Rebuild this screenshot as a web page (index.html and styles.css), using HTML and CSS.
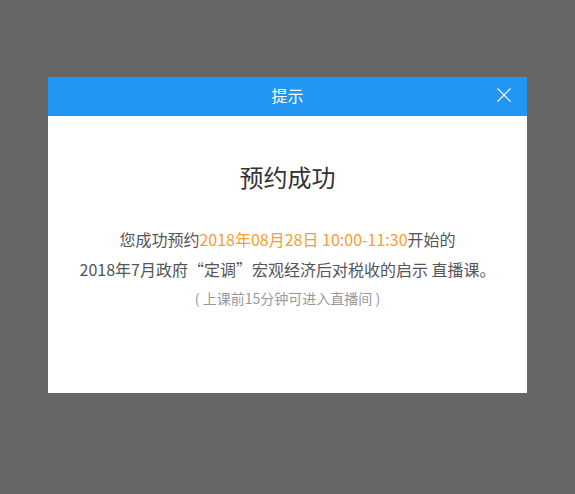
FILE: index.html
```html
<!DOCTYPE html>
<html lang="zh">
<head>
<meta charset="utf-8">
<link rel="stylesheet" href="styles.css">
</head>
<body>
<div class="overlay">
  <div class="dialog">
    <div class="dialog-header">
      <span class="dialog-title">提示</span>
      <span class="close">
        <svg width="14" height="14" viewBox="0 0 14 14"><path d="M0.5 0.5L13.5 13.5M13.5 0.5L0.5 13.5" stroke="#fff" stroke-width="1.2" fill="none"/></svg>
      </span>
    </div>
    <div class="dialog-body">
      <h2 class="success">预约成功</h2>
      <p class="line">您成功预约<span class="hl">2018年08月28日 10:00-11:30</span>开始的</p>
      <p class="line">2018年7月政府“定调”宏观经济后对税收的启示 直播课。</p>
      <p class="note">( 上课前15分钟可进入直播间 )</p>
    </div>
  </div>
</div>
</body>
</html>
```
FILE: styles.css
```css
html, body {
  margin: 0;
  padding: 0;
  height: 100%;
}
body {
  background: #666666;
  font-family: "Noto Sans CJK SC", "Noto Sans", sans-serif;
}
.overlay {
  padding-top: 77px;
  padding-left: 48px;
}
.dialog {
  width: 479px;
  height: 316px;
  background: #fff;
}
.dialog-header {
  position: relative;
  height: 39px;
  box-sizing: border-box;
  padding-bottom: 3px;
  background: #2196f3;
  display: flex;
  align-items: center;
  justify-content: center;
}
.dialog-title {
  color: #fff;
  font-size: 16px;
}
.close {
  position: absolute;
  right: 16px;
  top: 11px;
  width: 14px;
  height: 14px;
  display: block;
}
.close svg { display: block; }
.dialog-body {
  text-align: center;
  padding-top: 44px;
}
.success {
  margin: 0 0 30px;
  font-size: 24px;
  font-weight: normal;
  color: #333;
  line-height: 34px;
}
.line {
  margin: 0;
  font-size: 16px;
  color: #555;
  line-height: 30px;
}
.hl { color: #f7a030; }
.note {
  margin: 0;
  font-size: 14px;
  color: #999;
  line-height: 28px;
}
```
